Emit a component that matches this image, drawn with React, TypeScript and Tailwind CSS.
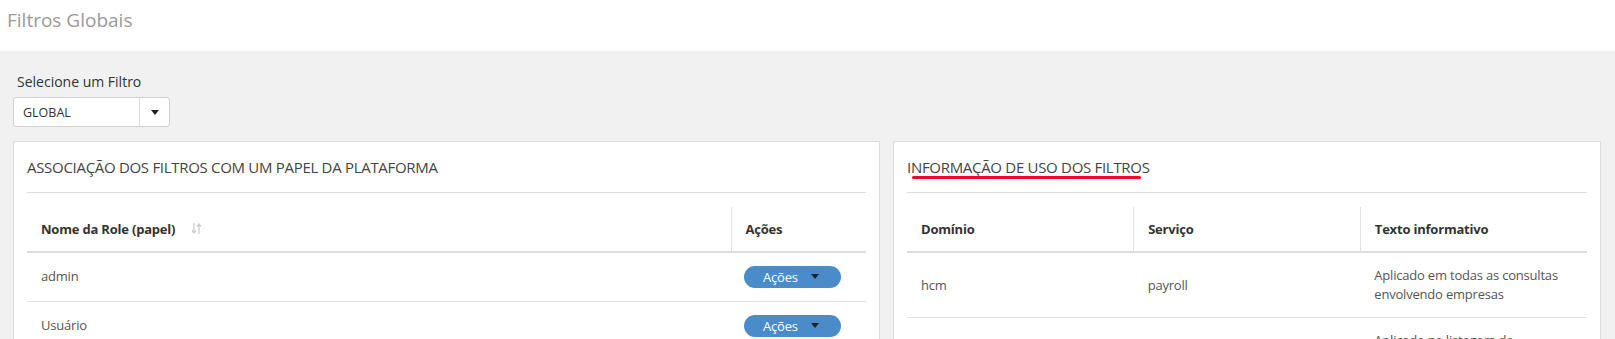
import { ReactNode } from 'react';

function Caret({ className = '' }: { className?: string }) {
  return (
    <svg width="8" height="5" viewBox="0 0 8 5" className={className}>
      <path d="M0 0h8L4 5z" fill="#222" />
    </svg>
  );
}

function SortIcon() {
  return (
    <svg width="11" height="13" viewBox="0 0 11 13" className="inline-block ml-[16px] -mt-[3px] align-middle">
      <g stroke="#cfcfcf" strokeWidth="1.4" fill="none">
        <path d="M3 1v10M1 8.5l2 2.5 2-2.5" />
        <path d="M8 12V2M6 4.5L8 2l2 2.5" />
      </g>
    </svg>
  );
}

function Panel({ title, width, children, marked }: { title: string; width: string; children: ReactNode; marked?: boolean }) {
  return (
    <div className={`${width} shrink-0 bg-white border border-[#dcdcdc] px-[13px]`}>
      <div className="pt-[13px] pb-[13px] border-b border-[#dedede]">
        <h2 className="relative inline-block text-[15px] leading-[22px] tracking-[-0.3px] text-[#444] font-normal">
          {title}
          {marked && (
            <span className="absolute left-[5px] top-[20px] h-[3px] w-[229px] rounded-full bg-[#ec0a25]" />
          )}
        </h2>
      </div>
      <div className="mt-[14px]">{children}</div>
    </div>
  );
}

function AcoesButton() {
  return (
    <button className="flex items-center h-[22px] w-[97px] rounded-full bg-[#4a8bca] pl-[19px] text-[13px] leading-[20px] tracking-[-0.2px] text-white">
      Ações
      <Caret className="ml-[13px]" />
    </button>
  );
}

const roles = ['admin', 'Usuário'];

const usage = [
  { dominio: 'hcm', servico: 'payroll', texto: 'Aplicado em todas as consultas envolvendo empresas' },
  { dominio: 'hcm', servico: 'payroll', texto: 'Aplicado na listagem de colaboradores e nas consultas envolvendo empresas' },
];

const th = 'h-[45px] pl-[14px] align-middle text-left font-bold text-[#333]';

export default function App() {
  return (
    <div className="w-[1615px] h-[339px] overflow-hidden bg-[#f1f1f1] font-['Open_Sans',sans-serif]">
      <header className="h-[51px] bg-white pl-[7px] pt-[7px]">
        <h1 className="text-[19px] leading-[26px] text-[#9a9a9a] font-normal">Filtros Globais</h1>
      </header>

      <main className="pl-[13px] pt-[21px]">
        <label className="block pl-[4px] text-[14px] leading-[20px] text-[#333]">Selecione um Filtro</label>
        <div className="mt-[5px] flex h-[30px] w-[157px] rounded-[3px] border border-[#d0d0d0] bg-white">
          <div className="flex-1 pl-[9px] pt-[2px] text-[12.5px] leading-[26px] text-[#333]">GLOBAL</div>
          <div className="flex w-[30px] items-center justify-center border-l border-[#dcdcdc]">
            <Caret />
          </div>
        </div>

        <div className="mt-[14px] flex gap-[13px]">
          <Panel title="ASSOCIAÇÃO DOS FILTROS COM UM PAPEL DA PLATAFORMA" width="w-[867px]">
            <table className="w-full table-fixed text-[13px] leading-[19px] tracking-[-0.2px]">
              <colgroup>
                <col className="w-[704px]" />
                <col />
              </colgroup>
              <thead>
                <tr className="border-b-2 border-[#dedede]">
                  <th className={th}>
                    Nome da Role (papel)
                    <SortIcon />
                  </th>
                  <th className={`${th} border-l border-[#e2e2e2]`}>Ações</th>
                </tr>
              </thead>
              <tbody>
                {roles.map((r) => (
                  <tr key={r} className="border-b border-[#e2e2e2]">
                    <td className="h-[49px] pl-[14px] align-middle text-[#555]">{r}</td>
                    <td className="h-[49px] pl-[13px] align-middle">
                      <AcoesButton />
                    </td>
                  </tr>
                ))}
              </tbody>
            </table>
          </Panel>

          <Panel title="INFORMAÇÃO DE USO DOS FILTROS" width="w-[708px]" marked>
            <table className="w-full table-fixed text-[13px] leading-[19px] tracking-[-0.2px]">
              <thead>
                <tr className="border-b-2 border-[#dedede]">
                  <th className={th}>Domínio</th>
                  <th className={`${th} border-l border-[#e2e2e2]`}>Serviço</th>
                  <th className={`${th} border-l border-[#e2e2e2]`}>Texto informativo</th>
                </tr>
              </thead>
              <tbody>
                {usage.map((u, i) => (
                  <tr key={i} className="border-b border-[#e2e2e2]">
                    <td className="pl-[14px] align-middle text-[#555]">{u.dominio}</td>
                    <td className="pl-[14px] align-middle text-[#555]">{u.servico}</td>
                    <td className="pl-[14px] pr-[10px] py-[13px] align-middle text-[#555]">{u.texto}</td>
                  </tr>
                ))}
              </tbody>
            </table>
          </Panel>
        </div>
      </main>
    </div>
  );
}
